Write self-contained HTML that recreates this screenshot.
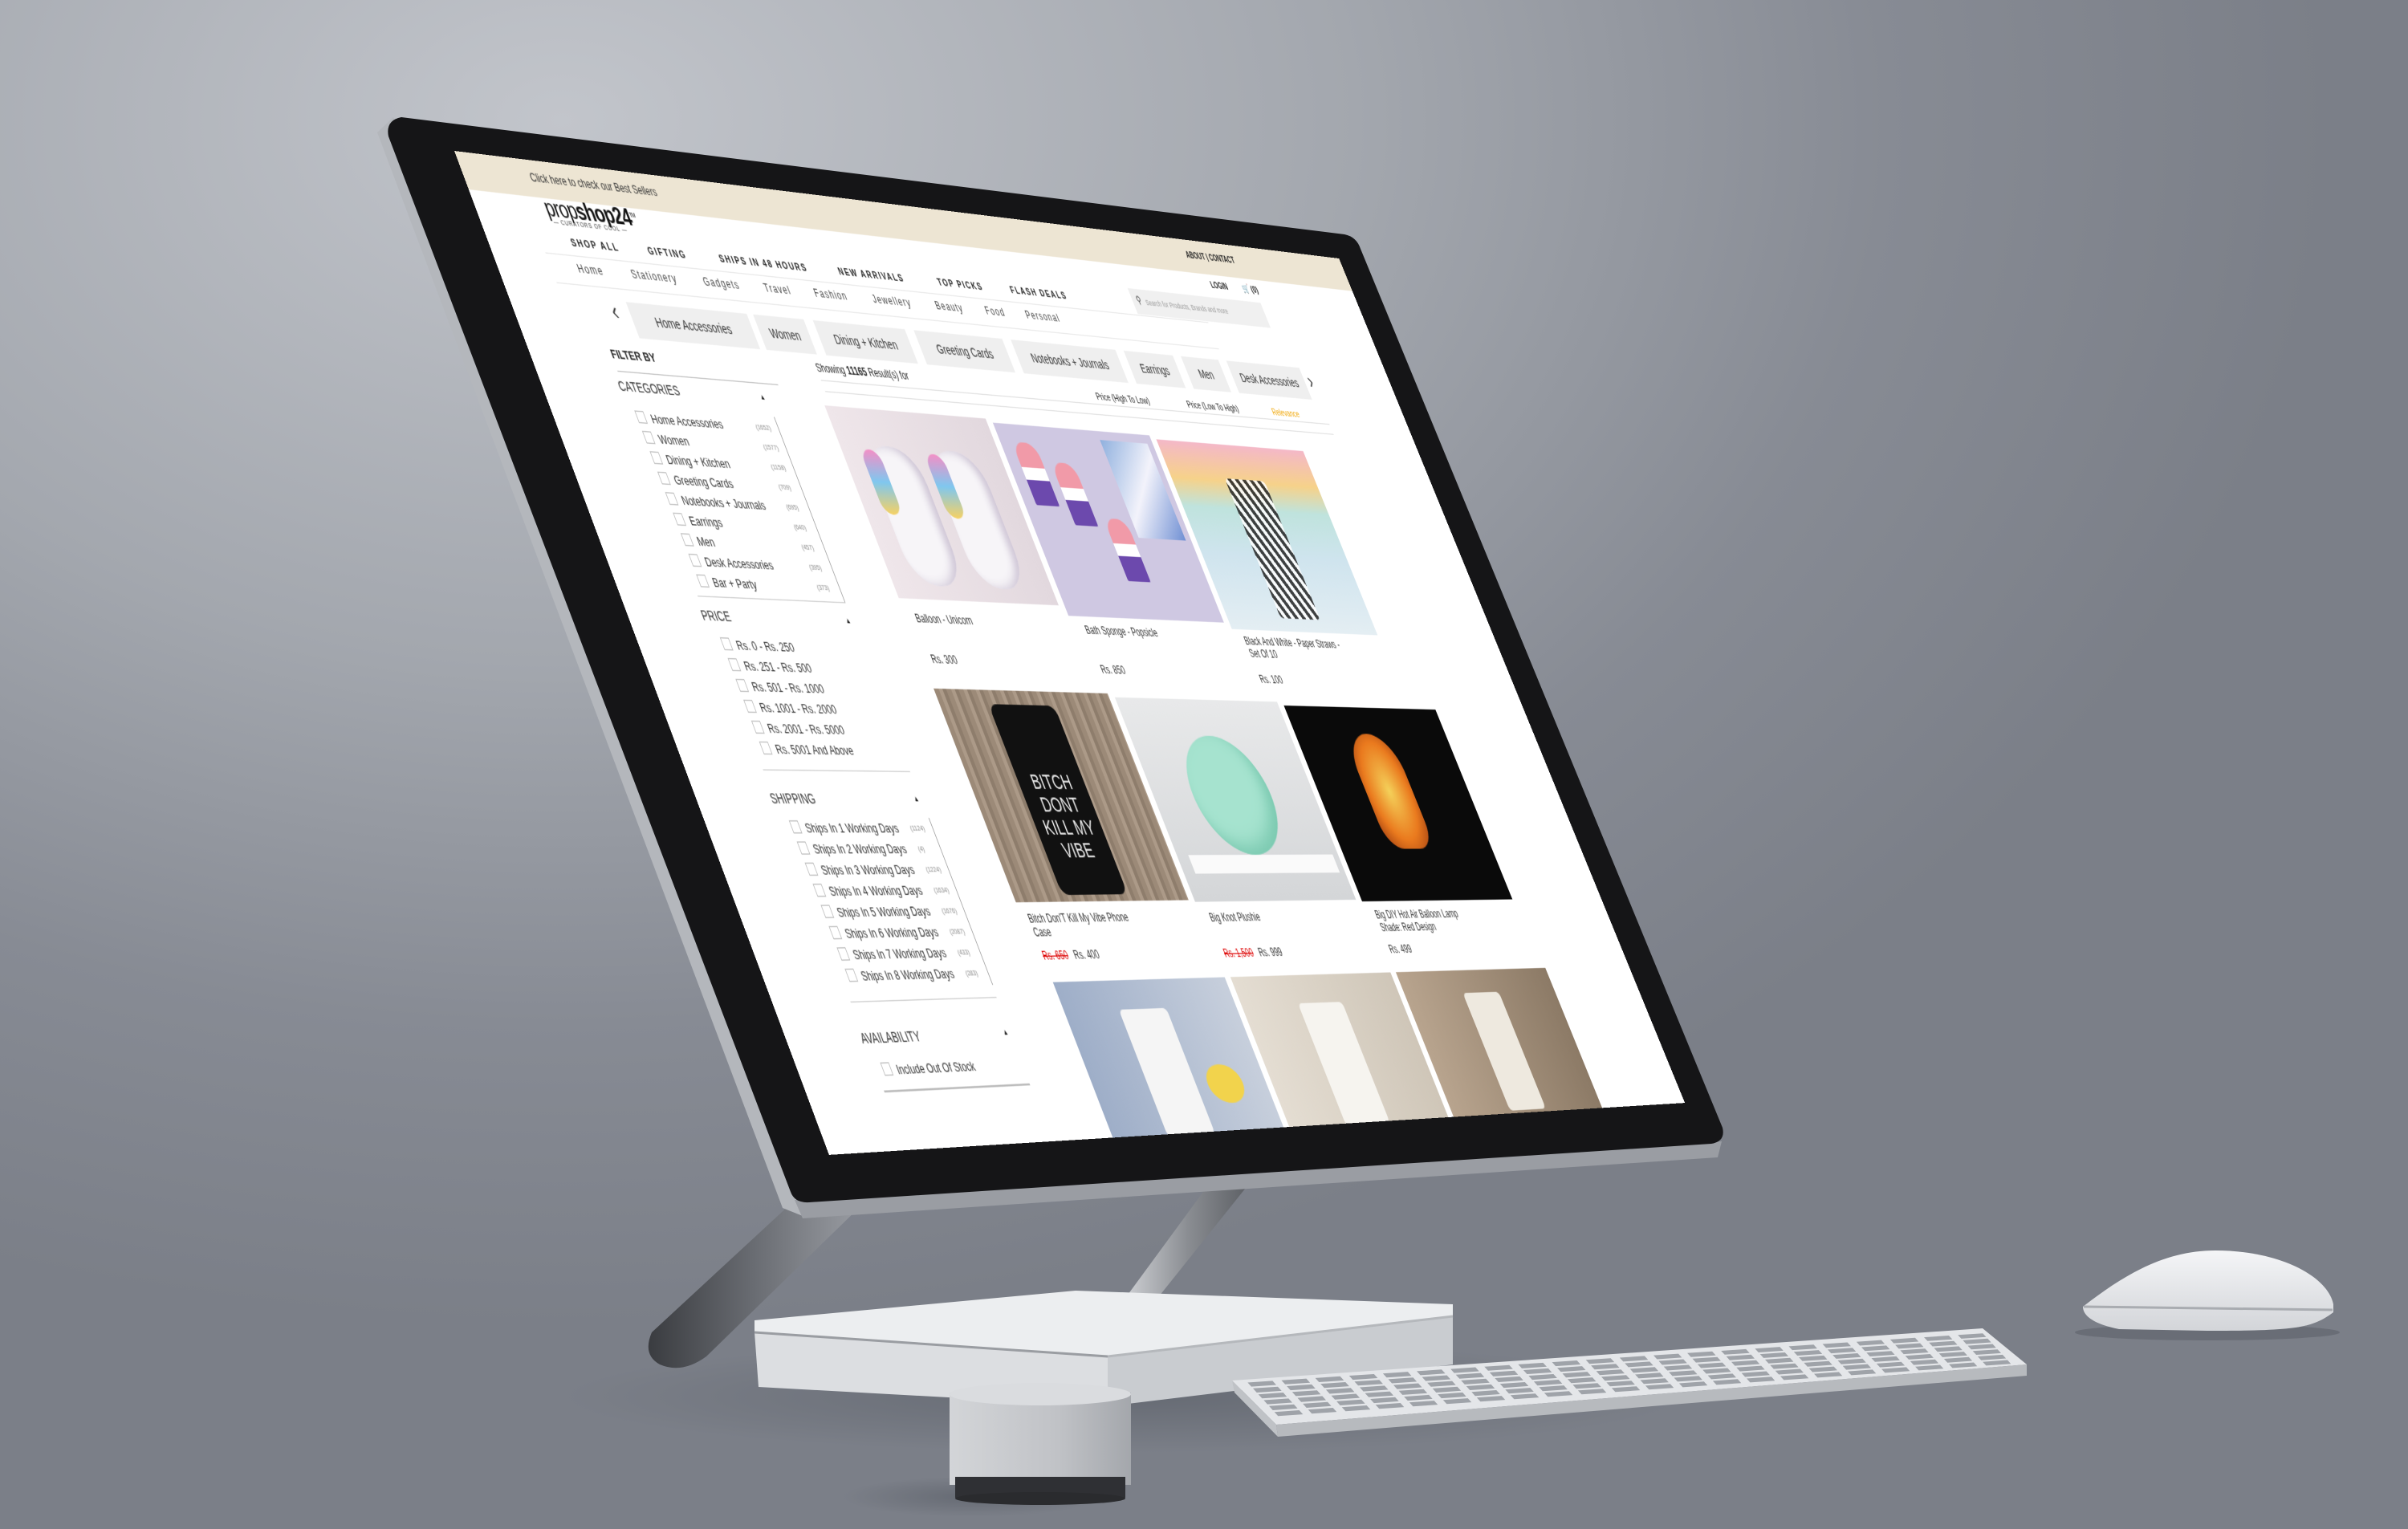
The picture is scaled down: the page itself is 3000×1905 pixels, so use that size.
<!DOCTYPE html>
<html><head><meta charset="utf-8">
<style>
*{margin:0;padding:0;box-sizing:border-box}
html,body{width:3000px;height:1905px;overflow:hidden}
body{position:relative;background:radial-gradient(ellipse 2200px 1500px at 700px 150px,#c2c5cb 0%,#a3a7ae 45%,#878b94 75%,#7b7f88 100%);font-family:"Liberation Sans",sans-serif}
#scene{position:absolute;left:0;top:0}
#page{position:absolute;left:0;top:0;width:1500px;height:1000px;background:#fff;overflow:hidden;transform-origin:0 0;color:#222}
#page .a{position:absolute;white-space:nowrap}
.beige{left:0;top:0;width:1500px;height:40px;background:#ede5d3}
.nav{font-size:11px;font-weight:bold;letter-spacing:2px;color:#222}
.sub{font-size:12px;letter-spacing:1.5px;color:#444}
.chip{background:#efefef;height:38px;font-size:14px;line-height:38px;text-align:center;color:#333;overflow:hidden}
.h{font-size:14px;color:#333}
.it{font-size:13px;color:#333}
.it:before{content:"";display:inline-block;width:11px;height:11px;border:1px solid #bbb;margin-right:8px;vertical-align:-1px}
.cnt{font-size:8px;color:#888}
.img{position:absolute;overflow:hidden}
.t{font-size:12px;color:#333}
.p{font-size:12px;color:#333}
.line{position:absolute;background:#ccc;height:1px}
</style></head><body>
<svg id="scene" width="3000" height="1905" viewBox="0 0 3000 1905">
<defs>
<linearGradient id="arm" x1="0" y1="0" x2="1" y2="0"><stop offset="0" stop-color="#3a3c40"/><stop offset=".5" stop-color="#6a6d73"/><stop offset="1" stop-color="#9a9da3"/></linearGradient>
<linearGradient id="arm2" x1="0" y1="0" x2="1" y2="0"><stop offset="0" stop-color="#cfd1d5"/><stop offset=".5" stop-color="#8a8d92"/><stop offset="1" stop-color="#5a5d62"/></linearGradient>
<linearGradient id="cyl" x1="0" y1="0" x2="1" y2="0"><stop offset="0" stop-color="#d3d5d8"/><stop offset=".6" stop-color="#c0c2c6"/><stop offset="1" stop-color="#a4a7ac"/></linearGradient>
<linearGradient id="mouse" x1="0" y1="0" x2="0" y2="1"><stop offset="0" stop-color="#f4f5f7"/><stop offset="1" stop-color="#d3d5d9"/></linearGradient>
<radialGradient id="sh" cx=".5" cy=".5" r=".5"><stop offset="0" stop-color="#555a63" stop-opacity=".55"/><stop offset="1" stop-color="#555a63" stop-opacity="0"/></radialGradient>
</defs>
<ellipse cx="1400" cy="1740" rx="700" ry="70" fill="url(#sh)"/>
<ellipse cx="1210" cy="1865" rx="160" ry="25" fill="url(#sh)"/>
<path d="M985,1500 L1075,1500 L880,1690 Q850,1712 822,1700 Q800,1688 812,1660 Z" fill="url(#arm)"/>
<polygon points="1510,1470 1560,1470 1440,1620 1400,1620" fill="url(#arm2)"/>
<polygon points="940,1645 1340,1608 1810,1625 1810,1640 1380,1690 940,1660" fill="#eceef0"/>
<polygon points="940,1660 1380,1690 1380,1752 945,1728" fill="#dcdee1"/>
<polygon points="1380,1690 1810,1640 1810,1700 1380,1752" fill="#c9ccd0"/>
<line x1="940" y1="1660" x2="1380" y2="1690" stroke="#9a9da2" stroke-width="3"/>
<line x1="1380" y1="1690" x2="1810" y2="1640" stroke="#b5b8bc" stroke-width="3"/>
<rect x="1183" y="1735" width="226" height="115" fill="url(#cyl)"/>
<rect x="1190" y="1840" width="212" height="26" fill="#2f3034"/>
<ellipse cx="1296" cy="1867" rx="106" ry="8" fill="#2a2b2e"/>
<ellipse cx="1296" cy="1737" rx="113" ry="14" fill="#dadcdf"/>
<polygon points="1535,1720 2470,1655 2525,1700 1590,1775" fill="#e4e6e9"/>
<polygon points="1535,1720 1590,1775 1592,1790 1538,1735" fill="#bfc2c6"/>
<polygon points="1590,1775 2525,1700 2525,1714 1592,1790" fill="#b7babe"/>
<g id="keys"></g>
<ellipse cx="2750" cy="1660" rx="165" ry="10" fill="#5d616a" opacity=".6"/>
<path d="M2595,1628 C2650,1585 2700,1558 2760,1558 C2840,1558 2900,1590 2907,1625 L2907,1635 C2880,1655 2860,1658 2750,1658 L2640,1656 C2610,1650 2595,1640 2595,1628 Z" fill="url(#mouse)"/>
<line x1="2596" y1="1628" x2="2906" y2="1632" stroke="#a9acb1" stroke-width="3"/>
<polygon points="470,165 490,146 995,1500 1000,1515 975,1505" fill="#b4b7bc"/>
<polygon points="990,1495 2145,1422 2140,1442 1000,1518" fill="#9a9da3"/>
<path d="M500,146 L1675,292 Q1690,295 1695,310 L2146,1405 Q2150,1422 2132,1425 L1008,1498 Q990,1499 985,1485 L484,170 Q480,150 500,146 Z" fill="#151517"/>
</svg>

<div id="page">
<div class="a beige"></div>
<div class="a" style="left:100px;top:12px;font-size:12px;color:#333">Click here to check our Best Sellers</div>
<div class="a" style="left:105px;top:36px;font-size:25px;letter-spacing:-1px;color:#111;line-height:26px"><span style="font-weight:300">prop</span><b>shop24</b><sup style="font-size:7px">TM</sup></div>
<div class="a" style="left:110px;top:62px;font-size:7px;letter-spacing:1px;color:#333">— CURATORS OF COOL —</div>
<div class="a nav" style="left:1190px;top:14px;font-size:10px;letter-spacing:0">ABOUT | CONTACT</div>
<div class="a nav" style="left:125px;top:80px">SHOP ALL</div>
<div class="a nav" style="left:240px;top:80px">GIFTING</div>
<div class="a nav" style="left:350px;top:80px">SHIPS IN 48 HOURS</div>
<div class="a nav" style="left:540px;top:80px">NEW ARRIVALS</div>
<div class="a nav" style="left:705px;top:80px">TOP PICKS</div>
<div class="a nav" style="left:830px;top:80px">FLASH DEALS</div>
<div class="line" style="left:80px;top:99px;width:1100px;background:#e6e6e6"></div>
<div class="a sub" style="left:120px;top:106px">Home</div>
<div class="a sub" style="left:200px;top:106px">Stationery</div>
<div class="a sub" style="left:310px;top:106px">Gadgets</div>
<div class="a sub" style="left:405px;top:106px">Travel</div>
<div class="a sub" style="left:485px;top:106px">Fashion</div>
<div class="a sub" style="left:580px;top:106px">Jewellery</div>
<div class="a sub" style="left:685px;top:106px">Beauty</div>
<div class="a sub" style="left:770px;top:106px">Food</div>
<div class="a sub" style="left:840px;top:106px">Personal</div>
<div class="line" style="left:80px;top:130px;width:1100px;background:#e6e6e6"></div>
<div class="a nav" style="left:1215px;top:48px;font-size:10px;letter-spacing:0">LOGIN</div>
<div class="a nav" style="left:1275px;top:46px;font-size:11px;letter-spacing:0">🛒 (0)</div>
<div class="a" style="left:1050px;top:68px;width:250px;height:30px;background:#f0f0f0;font-size:9px;color:#999;line-height:30px;padding-left:24px">Search for Products, Brands and more</div>
<div class="a" style="left:1058px;top:74px;font-size:12px;color:#444">⚲</div>
<div class="a" style="left:148px;top:140px;font-size:26px;color:#333">‹</div>
<div class="a chip" style="left:175px;top:144px;width:185px">Home Accessories</div>
<div class="a chip" style="left:370px;top:144px;width:80px">Women</div>
<div class="a chip" style="left:465px;top:144px;width:150px">Dining + Kitchen</div>
<div class="a chip" style="left:630px;top:144px;width:150px">Greeting Cards</div>
<div class="a chip" style="left:795px;top:144px;width:185px">Notebooks + Journals</div>
<div class="a chip" style="left:995px;top:144px;width:90px">Earrings</div>
<div class="a chip" style="left:1100px;top:144px;width:70px">Men</div>
<div class="a chip" style="left:1185px;top:144px;width:140px">Desk Accessories</div>
<div class="a" style="left:1332px;top:144px;font-size:26px;color:#333">›</div>

<div class="a" style="left:122px;top:194px;font-size:13px;font-weight:bold">FILTER BY</div>
<div class="line" style="left:122px;top:219px;width:245px;background:#bbb"></div>
<div class="a h" style="left:115px;top:227px">CATEGORIES</div>
<div class="a" style="left:330px;top:230px;font-size:8px">▲</div>
<div class="a it" style="left:125px;top:260px">Home Accessories</div><div class="a cnt" style="left:305px;top:263px">(1652)</div>
<div class="a it" style="left:125px;top:281px">Women</div><div class="a cnt" style="left:305px;top:284px">(1577)</div>
<div class="a it" style="left:125px;top:302px">Dining + Kitchen</div><div class="a cnt" style="left:305px;top:305px">(1158)</div>
<div class="a it" style="left:125px;top:323px">Greeting Cards</div><div class="a cnt" style="left:305px;top:326px">(709)</div>
<div class="a it" style="left:125px;top:344px">Notebooks + Journals</div><div class="a cnt" style="left:305px;top:347px">(695)</div>
<div class="a it" style="left:125px;top:365px">Earrings</div><div class="a cnt" style="left:305px;top:368px">(640)</div>
<div class="a it" style="left:125px;top:386px">Men</div><div class="a cnt" style="left:305px;top:389px">(457)</div>
<div class="a it" style="left:125px;top:407px">Desk Accessories</div><div class="a cnt" style="left:305px;top:410px">(395)</div>
<div class="a it" style="left:125px;top:428px">Bar + Party</div><div class="a cnt" style="left:305px;top:431px">(373)</div>
<div class="a" style="left:340px;top:255px;width:1px;height:195px;background:#999"></div>
<div class="line" style="left:115px;top:450px;width:226px"></div>
<div class="a h" style="left:110px;top:462px">PRICE</div>
<div class="a" style="left:330px;top:465px;font-size:8px">▲</div>
<div class="a it" style="left:125px;top:492px">Rs. 0 - Rs. 250</div>
<div class="a it" style="left:125px;top:513px">Rs. 251 - Rs. 500</div>
<div class="a it" style="left:125px;top:534px">Rs. 501 - Rs. 1000</div>
<div class="a it" style="left:125px;top:555px">Rs. 1001 - Rs. 2000</div>
<div class="a it" style="left:125px;top:576px">Rs. 2001 - Rs. 5000</div>
<div class="a it" style="left:125px;top:597px">Rs. 5001 And Above</div>
<div class="line" style="left:115px;top:625px;width:226px"></div>
<div class="a h" style="left:110px;top:646px">SHIPPING</div>
<div class="a" style="left:330px;top:649px;font-size:8px">▲</div>
<div class="a it" style="left:125px;top:676px">Ships In 1 Working Days</div><div class="a cnt" style="left:307px;top:679px">(1124)</div>
<div class="a it" style="left:125px;top:697px">Ships In 2 Working Days</div><div class="a cnt" style="left:307px;top:700px">(4)</div>
<div class="a it" style="left:125px;top:718px">Ships In 3 Working Days</div><div class="a cnt" style="left:307px;top:721px">(1224)</div>
<div class="a it" style="left:125px;top:739px">Ships In 4 Working Days</div><div class="a cnt" style="left:307px;top:742px">(1634)</div>
<div class="a it" style="left:125px;top:760px">Ships In 5 Working Days</div><div class="a cnt" style="left:307px;top:763px">(1676)</div>
<div class="a it" style="left:125px;top:781px">Ships In 6 Working Days</div><div class="a cnt" style="left:307px;top:784px">(2087)</div>
<div class="a it" style="left:125px;top:802px">Ships In 7 Working Days</div><div class="a cnt" style="left:307px;top:805px">(433)</div>
<div class="a it" style="left:125px;top:823px">Ships In 8 Working Days</div><div class="a cnt" style="left:307px;top:826px">(283)</div>
<div class="a" style="left:342px;top:673px;width:1px;height:170px;background:#999"></div>
<div class="line" style="left:115px;top:855px;width:226px"></div>
<div class="a h" style="left:110px;top:883px">AVAILABILITY</div>
<div class="a" style="left:330px;top:886px;font-size:8px">▲</div>
<div class="a it" style="left:125px;top:915px">Include Out Of Stock</div>
<div class="a" style="left:115px;top:942px;width:226px;height:2px;background:#bbb"></div>

<div class="a" style="left:440px;top:190px;font-size:12px">Showing <b>11165</b> Result(s) for</div>
<div class="line" style="left:440px;top:210px;width:900px;background:#ddd"></div>
<div class="a" style="left:910px;top:196px;font-size:11px">Price (High To Low)</div>
<div class="a" style="left:1075px;top:196px;font-size:11px">Price (Low To High)</div>
<div class="a" style="left:1235px;top:196px;font-size:11px;color:#f0a500">Relevance</div>
<div class="line" style="left:440px;top:222px;width:900px;background:#ddd"></div>

<div class="img" style="left:430px;top:238px;width:265px;height:205px;background:linear-gradient(90deg,#efe6ea,#e2d8de)">
 <div style="position:absolute;left:35px;top:40px;width:85px;height:150px;border-radius:40px;background:#f7f5f8;box-shadow:inset -8px 0 12px #cfc6d6"></div>
 <div style="position:absolute;left:140px;top:40px;width:85px;height:150px;border-radius:40px;background:#f7f5f8;box-shadow:inset -8px 0 12px #cfc6d6"></div>
 <div style="position:absolute;left:30px;top:45px;width:30px;height:70px;border-radius:15px;background:linear-gradient(#f38fc6,#7fc7ef,#f6d163)"></div>
 <div style="position:absolute;left:135px;top:45px;width:30px;height:70px;border-radius:15px;background:linear-gradient(#f38fc6,#7fc7ef,#f6d163)"></div>
</div>
<div class="img" style="left:705px;top:242px;width:275px;height:212px;background:#cfc8e2">
 <div style="position:absolute;left:20px;top:20px;width:40px;height:70px;border-radius:18px 18px 2px 2px;background:linear-gradient(#f19aa8 40%,#fff 40%,#fff 60%,#6c49ad 60%)"></div>
 <div style="position:absolute;left:75px;top:40px;width:40px;height:70px;border-radius:18px 18px 2px 2px;background:linear-gradient(#f19aa8 40%,#fff 40%,#fff 60%,#6c49ad 60%)"></div>
 <div style="position:absolute;left:130px;top:100px;width:40px;height:70px;border-radius:18px 18px 2px 2px;background:linear-gradient(#f19aa8 40%,#fff 40%,#fff 60%,#6c49ad 60%)"></div>
 <div style="position:absolute;left:180px;top:10px;width:85px;height:110px;background:linear-gradient(135deg,#8fb0de,#f3f3fb,#6f8fd3)"></div>
</div>
<div class="img" style="left:990px;top:246px;width:275px;height:215px;background:linear-gradient(#f4b8c8 0,#f6d28a 20%,#bfe3dd 35%,#cfe4ee 60%,#e4eef3)">
 <div style="position:absolute;left:100px;top:40px;width:75px;height:160px;background:repeating-linear-gradient(60deg,#222 0 6px,#fff 6px 12px);opacity:.85;border-radius:6px"></div>
</div>
<div class="a t" style="left:445px;top:457px">Balloon - Unicorn</div>
<div class="a p" style="left:445px;top:500px">Rs. 300</div>
<div class="a t" style="left:725px;top:462px">Bath Sponge - Popsicle</div>
<div class="a p" style="left:725px;top:505px">Rs. 850</div>
<div class="a t" style="left:1005px;top:467px">Black And White - Paper Straws -<br>Set Of 10</div>
<div class="a p" style="left:1005px;top:510px">Rs. 100</div>

<div class="img" style="left:430px;top:538px;width:290px;height:222px;background:repeating-linear-gradient(90deg,#9c8a78 0 8px,#ac9a88 8px 14px,#8e7d6c 14px 20px)">
 <div style="position:absolute;left:80px;top:15px;width:110px;height:200px;border-radius:12px;background:#111;color:#eee;font-size:22px;text-align:center;padding-top:70px;line-height:24px">BITCH<br>DONT<br>KILL MY<br>VIBE</div>
</div>
<div class="img" style="left:730px;top:542px;width:290px;height:220px;background:linear-gradient(#e8e9ea,#d4d6d8)">
 <div style="position:absolute;left:70px;top:40px;width:140px;height:130px;border-radius:50%;background:#a6e3cf;box-shadow:inset -10px -10px 20px #7bc9b0"></div>
 <div style="position:absolute;left:20px;top:170px;width:260px;height:20px;background:#fafafa"></div>
</div>
<div class="img" style="left:1030px;top:546px;width:290px;height:218px;background:#0a0a0a">
 <div style="position:absolute;left:90px;top:30px;width:90px;height:130px;border-radius:45px 45px 30px 30px;background:radial-gradient(#f4d15a,#ea7a1e 60%,#9a3a10)"></div>
</div>
<div class="a t" style="left:440px;top:770px">Bitch Don'T Kill My Vibe Phone<br>Case</div>
<div class="a p" style="left:440px;top:808px"><s style="color:#d00">Rs. 650</s>&nbsp;&nbsp; Rs. 400</div>
<div class="a t" style="left:745px;top:772px">Big Knot Plushie</div>
<div class="a p" style="left:745px;top:810px"><s style="color:#d00">Rs. 1,500</s>&nbsp;&nbsp; Rs. 999</div>
<div class="a t" style="left:1045px;top:772px">Big DIY Hot Air Balloon Lamp<br>Shade: Red Design</div>
<div class="a p" style="left:1045px;top:810px">Rs. 499</div>

<div class="img" style="left:440px;top:842px;width:290px;height:170px;background:linear-gradient(90deg,#9eaec8,#c7cfdc)"><div style="position:absolute;left:90px;top:30px;width:80px;height:130px;background:#f5f5f5;border-radius:6px"></div><div style="position:absolute;left:190px;top:90px;width:60px;height:40px;border-radius:50%;background:#f2d34c"></div></div>
<div class="img" style="left:740px;top:842px;width:290px;height:170px;background:linear-gradient(90deg,#e4ddd2,#cfc6b8)"><div style="position:absolute;left:100px;top:30px;width:80px;height:130px;background:#f6f4ef;border-radius:6px"></div></div>
<div class="img" style="left:1040px;top:842px;width:290px;height:170px;background:linear-gradient(90deg,#b8a48e,#8c7a66)"><div style="position:absolute;left:110px;top:25px;width:70px;height:130px;background:#eee9df;border-radius:6px"></div></div>
</div>

<script>
(function(){
var W=1500,H=1000;
var p=[566,188,1668,322,2099,1374,1033,1439];
var x0=p[0],y0=p[1],x1=p[2],y1=p[3],x2=p[4],y2=p[5],x3=p[6],y3=p[7];
var dx1=x1-x2,dx2=x3-x2,dx3=x0-x1+x2-x3,dy1=y1-y2,dy2=y3-y2,dy3=y0-y1+y2-y3;
var den=dx1*dy2-dx2*dy1;
var g=(dx3*dy2-dx2*dy3)/den,h=(dx1*dy3-dx3*dy1)/den;
var a=x1-x0+g*x1,b=x3-x0+h*x3,c=x0,d=y1-y0+g*y1,e=y3-y0+h*y3,f=y0;
a/=W;d/=W;g/=W;b/=H;e/=H;h/=H;
document.getElementById('page').style.transform='matrix3d('+[a,d,0,g,b,e,0,h,0,0,1,0,c,f,0,1].join(',')+')';
var s='';
var rows=6,cols=22;
function pt(u,v){
 var A=[1548,1722],B=[2475,1660],C=[2512,1700],D=[1588,1766];
 var tx=A[0]+(B[0]-A[0])*u,ty=A[1]+(B[1]-A[1])*u,bx=D[0]+(C[0]-D[0])*u,by=D[1]+(C[1]-D[1])*u;
 return [tx+(bx-tx)*v,ty+(by-ty)*v];}
for(var r=0;r<rows;r++)for(var k=0;k<cols;k++){
 var u0=k/cols+0.006,u1=(k+1)/cols-0.006,v0=r/rows+0.02,v1=(r+1)/rows-0.03;
 var q=[pt(u0,v0),pt(u1,v0),pt(u1,v1),pt(u0,v1)];
 s+='<polygon points="'+q.map(function(z){return z[0].toFixed(1)+','+z[1].toFixed(1)}).join(' ')+'" fill="#9fa3a9"/>';
}
document.getElementById('keys').innerHTML=s;
})();
</script>
</body></html>
